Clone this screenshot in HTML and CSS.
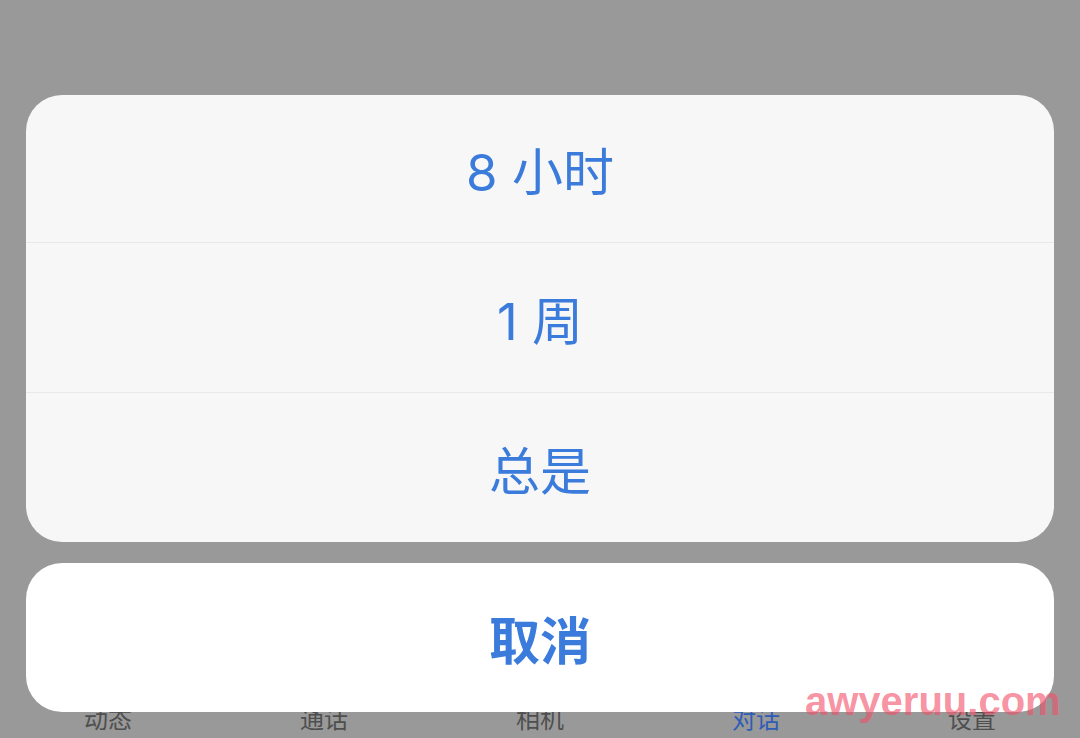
FILE: index.html
```html
<!DOCTYPE html>
<html lang="zh-CN">

<head>
    <meta charset="UTF-8">
    <meta name="viewport" content="width=device-width, initial-scale=1.0">
    <title>静音时长</title>
    <link rel="stylesheet" href="styles.css">
</head>

<body>
    <div class="screen">
        <div class="sheet">
            <ul class="options">
                <li>8 小时</li>
                <li>1 周</li>
                <li>总是</li>
            </ul>
            <div class="cancel">取消</div>
        </div>

        <ul class="tabbar">
            <li>动态</li>
            <li>通话</li>
            <li>相机</li>
            <li class="active">对话</li>
            <li>设置</li>
        </ul>

        <div class="mark">awyeruu.com</div>
    </div>
</body>

</html>
```

FILE: styles.css
```css
* {
    box-sizing: border-box;
}

body {
    margin: 0;
    background-color: #999999;
    font-family: Inter, "Noto Sans CJK SC", sans-serif;
}

ul {
    margin: 0;
    padding: 0;
}

li {
    list-style: none;
}

.screen {
    position: relative;
    width: 1080px;
    height: 738px;
    overflow: hidden;
    padding-top: 95px;
}

.sheet {
    position: relative;
    z-index: 1;
    padding: 0 26px;
    display: flex;
    flex-direction: column;
    gap: 21px;
}

.options {
    background-color: #f7f7f7;
    border-radius: 36px;
    overflow: hidden;
}

.options li {
    height: 150px;
    display: flex;
    align-items: center;
    justify-content: center;
    font-size: 51px;
    color: #3a7bdb;
    border-top: 1px solid #e9e9e9;
}

.options li:first-child {
    height: 147px;
    border-top: none;
}

.cancel {
    height: 149px;
    background-color: #ffffff;
    border-radius: 36px;
    display: flex;
    align-items: center;
    justify-content: center;
    font-size: 51px;
    font-weight: bold;
    color: #3a7bdb;
}

.tabbar {
    display: grid;
    grid-template-columns: repeat(5, 1fr);
    margin-top: -9px;
}

.tabbar li {
    text-align: center;
    font-family: "Noto Sans CJK SC", sans-serif;
    font-size: 24px;
    line-height: 30px;
    color: #4f4f4f;
}

.tabbar li.active {
    color: #2f5db6;
}

.mark {
    position: absolute;
    z-index: 2;
    left: 805px;
    top: 679px;
    font-family: "Liberation Sans", sans-serif;
    font-size: 40px;
    font-weight: bold;
    color: rgba(242, 78, 104, 0.62);
}
```
